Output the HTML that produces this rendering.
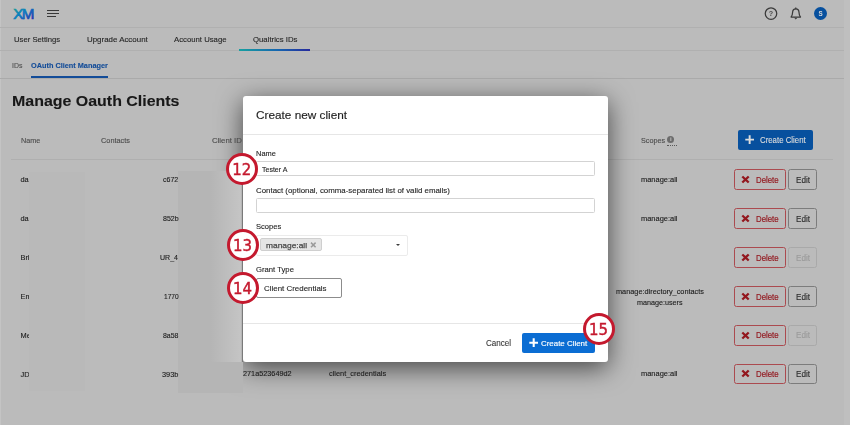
<!DOCTYPE html>
<html><head><meta charset="utf-8">
<style>
*{box-sizing:border-box;margin:0;padding:0}
html,body{width:850px;height:425px;overflow:hidden;background:#bbbbbb;font-family:"Liberation Sans",sans-serif;color:#222}
.abs{position:absolute}
#root{position:relative;width:850px;height:425px;overflow:hidden;background:#bbbbbb}
.line{position:absolute;height:1px;background:#afafaf}
.t{position:absolute;white-space:nowrap;-webkit-text-stroke:0.12px currentColor}
#tx{position:absolute;left:0;top:0;width:850px;height:425px;filter:blur(0.3px)}
.del{position:absolute;left:734.3px;width:52px;height:20.6px;border:1.3px solid #ab4a4f;border-radius:2.5px}
.del svg{position:absolute;left:6.2px;top:4.5px}
.edit{position:absolute;left:788px;width:29.2px;height:20.6px;border:1.2px solid #7c7c7c;border-radius:2.5px}
.edit.dis{border-color:#a9a9a9}
.blur{position:absolute}
.circ{position:absolute;width:31.8px;height:31.8px;border-radius:50%;border:3px solid #c4192e;background:#fff;color:#c4192e;font-family:"DejaVu Sans Condensed","DejaVu Sans",sans-serif;font-size:16.6px;line-height:27.6px;text-align:center;-webkit-text-stroke:0.45px #c4192e}
.circ span{display:inline-block;position:relative;left:-0.4px;filter:blur(0.3px)}
#modal{position:absolute;left:243px;top:96.4px;width:365.4px;height:265.4px;background:#fff;border-radius:3px;box-shadow:0 6px 26px rgba(0,0,0,.63)}
.inp{position:absolute;left:256.2px;width:339px;border:1px solid #d3d3d3;border-radius:1.5px;background:#fff}
</style></head><body>
<div id="root">
<div class="abs" style="left:0;top:0;width:1.2px;height:425px;background:#c4c4c4"></div>
<div class="abs" style="left:844px;top:0;width:6px;height:425px;background:#bfbfbf"></div>
<!-- top bar -->
<svg class="abs" style="left:12px;top:6px" width="26" height="16" viewBox="0 0 26 16">
<defs><linearGradient id="g" x1="0" y1="0" x2="1" y2="1"><stop offset="0" stop-color="#1aa388"/><stop offset=".45" stop-color="#097cc2"/><stop offset="1" stop-color="#2b22aa"/></linearGradient></defs>
<text x="1.3" y="13.3" font-family="Liberation Sans, sans-serif" font-size="15.2" letter-spacing="-1.7" fill="url(#g)" stroke="url(#g)" stroke-width=".7">XM</text></svg>
<div class="abs" style="left:47.4px;top:9.8px;width:11.3px;height:1.3px;background:#383838"></div>
<div class="abs" style="left:47.4px;top:13px;width:11.3px;height:1.3px;background:#383838"></div>
<div class="abs" style="left:47.4px;top:16.3px;width:8.7px;height:1.15px;background:#383838"></div>
<svg class="abs" style="left:763px;top:6px;filter:blur(0.3px)" width="16" height="16" viewBox="0 0 16 16"><circle cx="8" cy="7.6" r="5.75" fill="none" stroke="#3a3a3a" stroke-width="1.25"/><text x="8" y="10.2" font-size="7.2" font-weight="700" text-anchor="middle" fill="#4a4a4a" font-family="Liberation Sans, sans-serif">?</text></svg>
<svg class="abs" style="left:788px;top:6px;filter:blur(0.3px)" width="16" height="16" viewBox="0 0 16 16"><path d="M3.1 11 C4.5 9.7 4.5 8.4 4.6 6.3 C4.7 3.9 6 2.8 7.8 2.8 C9.6 2.8 10.9 3.9 11 6.3 C11.1 8.4 11.1 9.7 12.5 11 Z" fill="none" stroke="#3a3a3a" stroke-width="1.25" stroke-linejoin="round"/><path d="M7.8 1.9V2.8" stroke="#3a3a3a" stroke-width="1.2" stroke-linecap="round"/><path d="M6.7 12.1 L8.9 12.1 L7.8 13.2 Z" fill="#3a3a3a" stroke="#3a3a3a" stroke-width=".4"/></svg>
<div class="abs" style="left:813.7px;top:6.8px;width:13.6px;height:13.6px;border-radius:50%;background:#07509e;color:#dadada;font-size:6.3px;font-weight:700;line-height:13.8px;text-align:center"><span style="display:inline-block;filter:blur(0.3px)">S</span></div>
<div class="line" style="left:0;top:27px;width:844px;background:#b0b0b0"></div>
<div class="line" style="left:0;top:50px;width:844px;background:#b0b0b0"></div>
<div class="abs" style="left:239.2px;top:49px;width:71.2px;height:1.6px;background:linear-gradient(90deg,#17a0a0,#1565b0 55%,#262a9c)"></div>
<div class="abs" style="left:31px;top:76px;width:77px;height:2px;background:#134c98"></div>
<div class="line" style="left:0;top:78px;width:844px;background:#aaaaaa"></div>
<!-- table head extras -->
<div class="abs" style="left:667.1px;top:136px;width:7.3px;height:7.3px;border-radius:50%;background:#6c6c6c;color:#c4c4c4;font-size:6px;font-weight:700;line-height:7.5px;text-align:center;filter:blur(0.3px)">i</div>
<div class="abs" style="left:667px;top:145px;width:10px;height:0;border-top:1px dotted #4a4a4a;opacity:.85"></div>
<div class="abs" style="left:738.1px;top:130.3px;width:75.1px;height:20.2px;background:#07509e;border-radius:2px"><svg class="abs" style="left:7px;top:5px" width="9.3" height="9.3" viewBox="0 0 10 10"><path d="M5 0.3V9.7M0.3 5H9.7" stroke="#dcdcdc" stroke-width="2.1"/></svg></div>
<div class="line" style="left:11px;top:159px;width:822px;background:#afafaf"></div>
<div class="del" style="top:169.4px"><svg width="9" height="9" viewBox="0 0 9 9"><path d="M1.3 1.5L7.7 7.5M7.7 1.5L1.3 7.5" stroke="#93171e" stroke-width="2.35"/></svg></div><div class="edit" style="top:169.4px"></div>
<div class="del" style="top:208.3px"><svg width="9" height="9" viewBox="0 0 9 9"><path d="M1.3 1.5L7.7 7.5M7.7 1.5L1.3 7.5" stroke="#93171e" stroke-width="2.35"/></svg></div><div class="edit" style="top:208.3px"></div>
<div class="del" style="top:247.2px"><svg width="9" height="9" viewBox="0 0 9 9"><path d="M1.3 1.5L7.7 7.5M7.7 1.5L1.3 7.5" stroke="#93171e" stroke-width="2.35"/></svg></div><div class="edit dis" style="top:247.2px"></div>
<div class="del" style="top:286.1px"><svg width="9" height="9" viewBox="0 0 9 9"><path d="M1.3 1.5L7.7 7.5M7.7 1.5L1.3 7.5" stroke="#93171e" stroke-width="2.35"/></svg></div><div class="edit" style="top:286.1px"></div>
<div class="del" style="top:325.0px"><svg width="9" height="9" viewBox="0 0 9 9"><path d="M1.3 1.5L7.7 7.5M7.7 1.5L1.3 7.5" stroke="#93171e" stroke-width="2.35"/></svg></div><div class="edit dis" style="top:325.0px"></div>
<div class="del" style="top:363.9px"><svg width="9" height="9" viewBox="0 0 9 9"><path d="M1.3 1.5L7.7 7.5M7.7 1.5L1.3 7.5" stroke="#93171e" stroke-width="2.35"/></svg></div><div class="edit" style="top:363.9px"></div>

<!-- modal -->
<div id="modal"></div>
<div class="blur" style="left:178.1px;top:170.8px;width:64.9px;height:221.7px;background:linear-gradient(90deg,#b5b5b5 0,#b5b5b5 50%,#c5c5c5 97.5%,#7a7a7a 98.5%,#7a7a7a 100%)"></div>
<div class="blur" style="left:178.1px;top:362px;width:64.9px;height:30.5px;background:#b5b5b5"></div>
<div class="abs" style="left:243px;top:134px;width:365.4px;height:1px;background:#e6e6e6"></div>
<div class="inp" style="top:161.2px;height:15.2px"></div>
<div class="inp" style="top:198.1px;height:14.6px"></div>
<div class="abs" style="left:256.2px;top:235px;width:151.8px;height:20.6px;border:1px solid #ebebeb;border-radius:2px"></div>
<div class="abs" style="left:259.8px;top:238.4px;width:61.8px;height:13px;background:#e5e5e5;border:1px solid #cfcfcf;border-radius:2px"></div>
<svg class="abs" style="left:309.6px;top:242.4px" width="7" height="6" viewBox="0 0 7 6"><path d="M1 0.6L5.6 5.2M5.6 0.6L1 5.2" stroke="#9a9a9a" stroke-width="1.5"/></svg>
<div class="abs" style="left:395.9px;top:244px;width:0;height:0;border-left:2.1px solid transparent;border-right:2.1px solid transparent;border-top:2.7px solid #3c3c3c"></div>
<div class="abs" style="left:256.2px;top:278.4px;width:86px;height:19.9px;border:1px solid #8c8c8c;border-radius:2px"></div>
<div class="abs" style="left:243px;top:323px;width:365.4px;height:1px;background:#e6e6e6"></div>
<div class="abs" style="left:522.2px;top:332.9px;width:72.7px;height:20.1px;background:#0b6dd3;border-radius:2px"><svg class="abs" style="left:6.6px;top:5.4px" width="9.4" height="9.4" viewBox="0 0 10 10"><path d="M5 0.3V9.7M0.3 5H9.7" stroke="#fff" stroke-width="2.2"/></svg></div>
<!-- texts -->
<div id="tx">
<div class="t" style="left:13.90px;top:35.00px;font-size:8px;line-height:10px;color:#262626;transform:scaleX(0.9622);transform-origin:0 0;">User Settings</div>
<div class="t" style="left:86.90px;top:35.00px;font-size:8px;line-height:10px;color:#262626;transform:scaleX(0.9895);transform-origin:0 0;">Upgrade Account</div>
<div class="t" style="left:173.70px;top:35.00px;font-size:8px;line-height:10px;color:#262626;transform:scaleX(0.9678);transform-origin:0 0;">Account Usage</div>
<div class="t" style="left:253.20px;top:35.00px;font-size:8px;line-height:10px;color:#262626;transform:scaleX(0.9700);transform-origin:0 0;">Qualtrics IDs</div>
<div class="t" style="left:11.80px;top:61.00px;font-size:7px;line-height:10px;color:#505050;transform:scaleX(0.9859);transform-origin:0 0;">IDs</div>
<div class="t" style="left:31.10px;top:61.00px;font-size:7px;line-height:10px;color:#134c98;font-weight:700;transform:scaleX(1.0458);transform-origin:0 0;">OAuth Client Manager</div>
<div class="t" style="left:11.60px;top:90.00px;font-size:16px;line-height:22px;color:#181818;font-weight:700;transform:scale(0.9967,0.91);transform-origin:0 16px;">Manage Oauth Clients</div>
<div class="t" style="left:20.60px;top:136.00px;font-size:7.3px;line-height:10px;color:#4c4c4c;transform:scaleX(0.9955);transform-origin:0 0;">Name</div>
<div class="t" style="left:100.60px;top:136.00px;font-size:7.3px;line-height:10px;color:#4c4c4c;transform:scaleX(1.0066);transform-origin:0 0;">Contacts</div>
<div class="t" style="left:212.30px;top:136.00px;font-size:7.3px;line-height:10px;color:#4c4c4c;transform:scaleX(1.0657);transform-origin:0 0;">Client ID</div>
<div class="t" style="left:641.10px;top:136.00px;font-size:7.3px;line-height:10px;color:#4c4c4c;transform:scaleX(0.9891);transform-origin:0 0;">Scopes</div>
<div class="t" style="left:20.60px;top:175.00px;font-size:7.4px;line-height:10px;color:#1c1c1c;letter-spacing:-0.1px;">da</div>
<div class="t" style="left:20.60px;top:214.00px;font-size:7.4px;line-height:10px;color:#1c1c1c;letter-spacing:-0.1px;">da</div>
<div class="t" style="left:20.60px;top:253.00px;font-size:7.4px;line-height:10px;color:#1c1c1c;letter-spacing:-0.1px;">Bri</div>
<div class="t" style="left:20.60px;top:292.00px;font-size:7.4px;line-height:10px;color:#1c1c1c;letter-spacing:-0.1px;">Em</div>
<div class="t" style="left:20.60px;top:331.00px;font-size:7.4px;line-height:10px;color:#1c1c1c;letter-spacing:-0.1px;">Me</div>
<div class="t" style="left:20.60px;top:370.00px;font-size:7.4px;line-height:10px;color:#1c1c1c;letter-spacing:-0.1px;">JD</div>
<div class="t" style="left:163.10px;top:175.00px;font-size:7.4px;line-height:10px;color:#1c1c1c;transform:scaleX(0.9456);transform-origin:0 0;">c672</div>
<div class="t" style="left:162.60px;top:214.00px;font-size:7.4px;line-height:10px;color:#1c1c1c;transform:scaleX(0.9520);transform-origin:0 0;">852b</div>
<div class="t" style="left:160.30px;top:253.00px;font-size:7.4px;line-height:10px;color:#1c1c1c;transform:scaleX(0.9501);transform-origin:0 0;">UR_4</div>
<div class="t" style="left:164.20px;top:292.00px;font-size:7.4px;line-height:10px;color:#1c1c1c;transform:scaleX(0.8890);transform-origin:0 0;">1770</div>
<div class="t" style="left:162.80px;top:331.00px;font-size:7.4px;line-height:10px;color:#1c1c1c;transform:scaleX(0.9394);transform-origin:0 0;">8a58</div>
<div class="t" style="left:161.80px;top:370.00px;font-size:7.4px;line-height:10px;color:#1c1c1c;transform:scaleX(1.0025);transform-origin:0 0;">393b</div>
<div class="t" style="left:242.60px;top:369.00px;font-size:7.4px;line-height:10px;color:#1c1c1c;transform:scaleX(0.9849);transform-origin:0 0;">271a523649d2</div>
<div class="t" style="left:328.80px;top:369.00px;font-size:7.4px;line-height:10px;color:#1c1c1c;transform:scaleX(0.9997);transform-origin:0 0;">client_credentials</div>
<div class="t" style="left:641.10px;top:175.00px;font-size:7.4px;line-height:10px;color:#1c1c1c;transform:scaleX(1.0094);transform-origin:0 0;">manage:all</div>
<div class="t" style="left:641.10px;top:214.00px;font-size:7.4px;line-height:10px;color:#1c1c1c;transform:scaleX(1.0094);transform-origin:0 0;">manage:all</div>
<div class="t" style="left:641.10px;top:369.00px;font-size:7.4px;line-height:10px;color:#1c1c1c;transform:scaleX(1.0094);transform-origin:0 0;">manage:all</div>
<div class="t" style="left:615.60px;top:287.00px;font-size:7.4px;line-height:10px;color:#1c1c1c;transform:scaleX(0.9914);transform-origin:0 0;">manage:directory_contacts</div>
<div class="t" style="left:636.50px;top:298.00px;font-size:7.4px;line-height:10px;color:#1c1c1c;transform:scaleX(0.9729);transform-origin:0 0;">manage:users</div>
<div class="t" style="left:256.20px;top:107.00px;font-size:11.7px;line-height:16px;color:#1e1e1e;transform:scaleX(1.0092);transform-origin:0 0;-webkit-text-stroke:0.15px #1e1e1e;">Create new client</div>
<div class="t" style="left:256.20px;top:149.00px;font-size:7.9px;line-height:10px;color:#262626;transform:scaleX(0.9447);transform-origin:0 0;">Name</div>
<div class="t" style="left:262.20px;top:165.00px;font-size:7.5px;line-height:10px;color:#262626;transform:scaleX(0.9355);transform-origin:0 0;">Tester A</div>
<div class="t" style="left:256.20px;top:186.00px;font-size:8px;line-height:10px;color:#262626;transform:scaleX(0.9845);transform-origin:0 0;">Contact (optional, comma-separated list of valid emails)</div>
<div class="t" style="left:256.20px;top:222.00px;font-size:8px;line-height:10px;color:#262626;transform:scaleX(0.9444);transform-origin:0 0;">Scopes</div>
<div class="t" style="left:265.60px;top:241.00px;font-size:7.8px;line-height:10px;color:#4a4a4a;transform:scaleX(1.0764);transform-origin:0 0;-webkit-text-stroke:0.25px #4a4a4a;">manage:all</div>
<div class="t" style="left:256.30px;top:265.00px;font-size:8px;line-height:10px;color:#262626;transform:scaleX(0.9614);transform-origin:0 0;">Grant Type</div>
<div class="t" style="left:263.80px;top:284.00px;font-size:7.9px;line-height:10px;color:#262626;transform:scaleX(1.0041);transform-origin:0 0;">Client Credentials</div>
<div class="t" style="left:485.50px;top:339.00px;font-size:8.2px;line-height:10px;color:#3a3a3a;transform:scaleX(0.9862);transform-origin:0 0;">Cancel</div>
<div class="t" style="left:541.30px;top:339.00px;font-size:8px;line-height:10px;color:#ffffff;transform:scaleX(0.9881);transform-origin:0 0;-webkit-text-stroke:0.15px #fff;">Create Client</div>
<div class="t" style="left:760.20px;top:136.00px;font-size:8.2px;line-height:10px;color:#dcdcdc;transform:scaleX(0.9567);transform-origin:0 0;">Create Client</div>
<div class="t" style="left:756.10px;top:175.00px;font-size:8.7px;line-height:10px;color:#93171e;transform:scaleX(0.9006);transform-origin:0 0;-webkit-text-stroke:0.2px #93171e;">Delete</div>
<div class="t" style="left:796.10px;top:175.00px;font-size:8.6px;line-height:10px;color:#2c2c2c;transform:scaleX(0.9487);transform-origin:0 0;">Edit</div>
<div class="t" style="left:756.10px;top:214.00px;font-size:8.7px;line-height:10px;color:#93171e;transform:scaleX(0.9006);transform-origin:0 0;-webkit-text-stroke:0.2px #93171e;">Delete</div>
<div class="t" style="left:796.10px;top:214.00px;font-size:8.6px;line-height:10px;color:#2c2c2c;transform:scaleX(0.9487);transform-origin:0 0;">Edit</div>
<div class="t" style="left:756.10px;top:253.00px;font-size:8.7px;line-height:10px;color:#93171e;transform:scaleX(0.9006);transform-origin:0 0;-webkit-text-stroke:0.2px #93171e;">Delete</div>
<div class="t" style="left:796.10px;top:253.00px;font-size:8.6px;line-height:10px;color:#9a9a9a;transform:scaleX(0.9487);transform-origin:0 0;">Edit</div>
<div class="t" style="left:756.10px;top:292.00px;font-size:8.7px;line-height:10px;color:#93171e;transform:scaleX(0.9006);transform-origin:0 0;-webkit-text-stroke:0.2px #93171e;">Delete</div>
<div class="t" style="left:796.10px;top:292.00px;font-size:8.6px;line-height:10px;color:#2c2c2c;transform:scaleX(0.9487);transform-origin:0 0;">Edit</div>
<div class="t" style="left:756.10px;top:330.00px;font-size:8.7px;line-height:10px;color:#93171e;transform:scaleX(0.9006);transform-origin:0 0;-webkit-text-stroke:0.2px #93171e;">Delete</div>
<div class="t" style="left:796.10px;top:330.00px;font-size:8.6px;line-height:10px;color:#9a9a9a;transform:scaleX(0.9487);transform-origin:0 0;">Edit</div>
<div class="t" style="left:756.10px;top:369.00px;font-size:8.7px;line-height:10px;color:#93171e;transform:scaleX(0.9006);transform-origin:0 0;-webkit-text-stroke:0.2px #93171e;">Delete</div>
<div class="t" style="left:796.10px;top:369.00px;font-size:8.6px;line-height:10px;color:#2c2c2c;transform:scaleX(0.9487);transform-origin:0 0;">Edit</div>
</div>
<!-- blur boxes -->
<div class="blur" style="left:28.8px;top:171.5px;width:56.4px;height:219.5px;background:#b9b9b9"></div>
<!-- circles -->
<div class="circ" style="left:226.2px;top:153.4px"><span>12</span></div>
<div class="circ" style="left:227.1px;top:229.3px"><span>13</span></div>
<div class="circ" style="left:227.0px;top:272.4px"><span>14</span></div>
<div class="circ" style="left:583.1px;top:313.1px"><span>15</span></div>

</div>
</body></html>
